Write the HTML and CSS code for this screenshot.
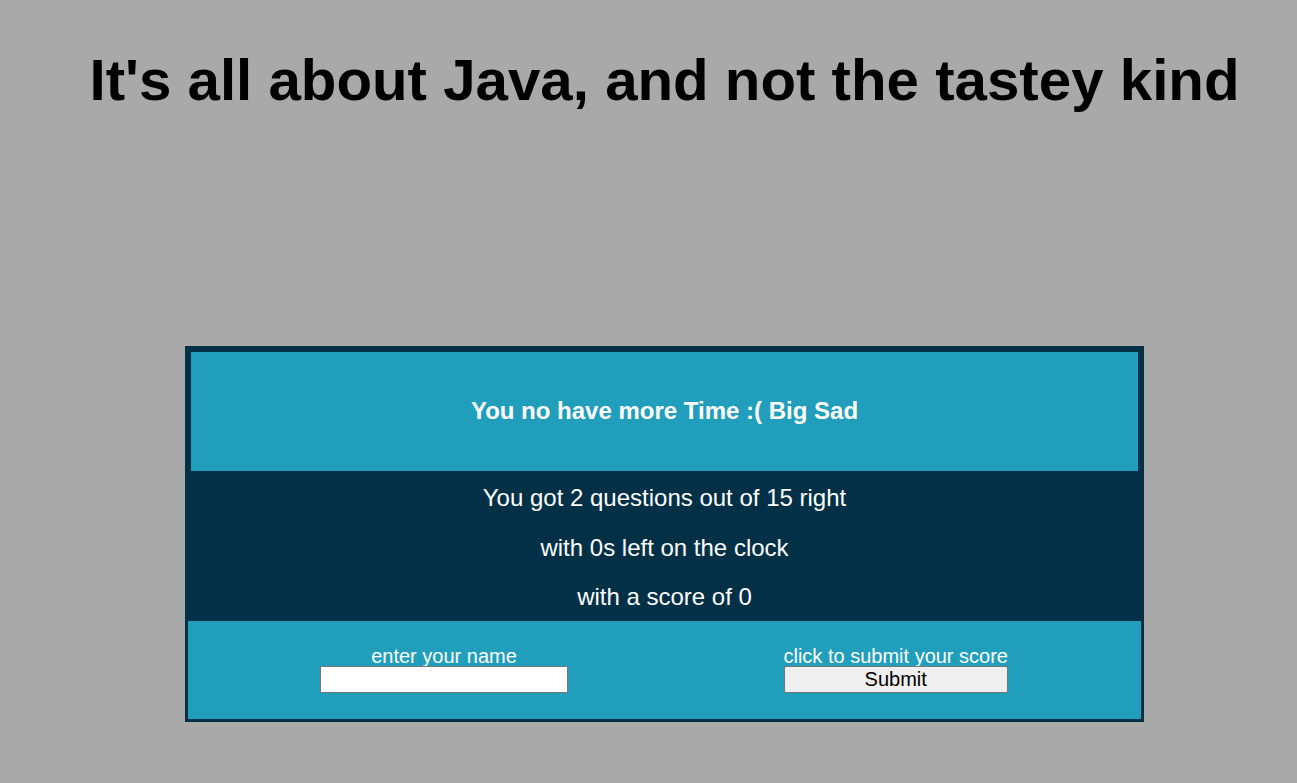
FILE: index.html
```html
<!DOCTYPE html>
<html>
<head>
<meta charset="utf-8">
<title>Java Quiz</title>
<link rel="stylesheet" href="styles.css">
</head>
<body>
<div class="page">
  <h1 class="title">It's all about Java, and not the tastey kind</h1>
  <div class="quiz">
    <div class="quiz-head">You no have more Time :( Big Sad</div>
    <div class="quiz-results">
      <p class="result-line">You got 2 questions out of 15 right</p>
      <p class="result-line">with 0s left on the clock</p>
      <p class="result-line">with a score of 0</p>
    </div>
    <div class="quiz-form">
      <div class="field">
        <label class="field-label" for="name">enter your name</label>
        <input class="name-input" id="name" type="text">
      </div>
      <div class="field">
        <span class="field-label">click to submit your score</span>
        <button class="submit-btn" type="button">Submit</button>
      </div>
    </div>
  </div>
</div>
</body>
</html>
```

FILE: styles.css
```css
html, body {
  margin: 0;
  padding: 0;
}
body {
  background: #a9a9a9;
  font-family: "Liberation Sans", Arial, sans-serif;
}
.page {
  padding-left: 32px;
  padding-top: 46px;
}
.title {
  margin: 0;
  font-size: 58.25px;
  font-weight: bold;
  line-height: 67px;
  text-align: center;
  color: #000;
}
.quiz {
  width: 953px;
  margin: 233px auto 0;
  border: 3px solid #023047;
  background: #023047;
}
.quiz-head {
  margin: 3px 3px 0;
  padding: 45px 0 47px;
  background: #219ebc;
  color: #fff;
  font-size: 24px;
  font-weight: bold;
  line-height: 27px;
  text-align: center;
}
.quiz-results {
  display: flex;
  flex-direction: column;
  gap: 22.5px;
  padding: 13px 0 11px;
  color: #fff;
  text-align: center;
}
.result-line {
  margin: 0;
  font-size: 24px;
  line-height: 27px;
}
.quiz-form {
  display: flex;
  justify-content: space-between;
  padding: 22px 133px 26px 132px;
  background: #219ebc;
}
.field {
  display: flex;
  flex-direction: column;
  align-items: center;
}
.field-label {
  padding-top: 3px;
  color: #fff;
  font-size: 20px;
  line-height: 20px;
}
.name-input {
  box-sizing: border-box;
  width: 248px;
  height: 27px;
  margin: 0;
  padding: 0 4px;
  border: 1px solid #767676;
  background: #fff;
  font-family: "Liberation Sans", Arial, sans-serif;
  font-size: 16px;
}
.submit-btn {
  box-sizing: border-box;
  width: 224px;
  height: 27px;
  margin: 0;
  padding: 0;
  border: 1px solid #767676;
  border-radius: 2px;
  background: #efefef;
  color: #000;
  font-family: "Liberation Sans", Arial, sans-serif;
  font-size: 20px;
  line-height: 25px;
}
```
